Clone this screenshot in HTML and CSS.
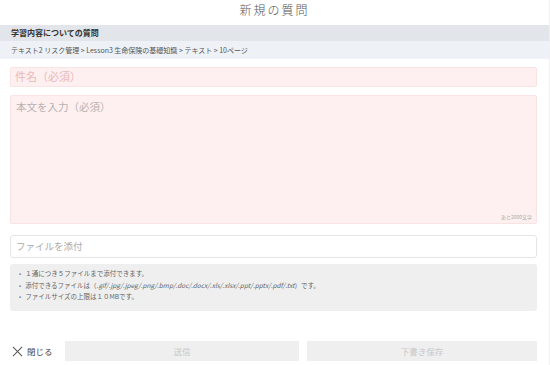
FILE: index.html
```html
<!DOCTYPE html>
<html lang="ja">
<head>
<meta charset="utf-8">
<link rel="stylesheet" href="styles.css">
</head>
<body>
<div class="page">
  <h1 class="title">新規の質問</h1>
  <div class="section-head">学習内容についての質問</div>
  <div class="crumbs">テキスト2 リスク管理 &gt; Lesson3 生命保険の基礎知識 &gt; テキスト &gt; 10ページ</div>
  <div class="form">
    <div class="field subject">件名（必須）</div>
    <div class="field body-field">
      <span class="ph">本文を入力（必須）</span>
      <span class="counter">あと2000文字</span>
    </div>
    <div class="field file">ファイルを添付</div>
    <ul class="info">
      <li>１通につき５ファイルまで添付できます。</li>
      <li>添付できるファイルは（<i>.gif/.jpg/.jpeg/.png/.bmp/.doc/.docx/.xls/.xlsx/.ppt/.pptx/.pdf/.txt</i>）です。</li>
      <li>ファイルサイズの上限は１０MBです。</li>
    </ul>
    <div class="footer">
      <div class="close">
        <svg class="x" viewBox="0 0 12 12" width="11" height="11"><path d="M1 1L11 11M11 1L1 11" stroke="#555" stroke-width="1.1" fill="none"/></svg>
        <span>閉じる</span>
      </div>
      <div class="btn send">送信</div>
      <div class="btn draft">下書き保存</div>
    </div>
  </div>
</div>
</body>
</html>
```
FILE: styles.css
```css
* { box-sizing: border-box; }
html, body { margin: 0; padding: 0; background: #fff; }
body {
  font-family: "Noto Sans CJK JP", "Noto Sans", sans-serif;
  color: #444;
  width: 550px;
  height: 365px;
  overflow: hidden;
}
.page { width: 550px; border-right: 1px solid #f0f0f0; height: 365px; }
.title {
  margin: 0;
  height: 25px;
  line-height: 20px;
  text-align: center;
  font-size: 12px;
  font-weight: 300;
  letter-spacing: 2px;
  color: #555;
}
.section-head {
  height: 16px;
  line-height: 16px;
  background: #e2e6ea;
  padding-left: 11px;
  font-size: 8px;
  font-weight: 700;
  color: #333;
}
.crumbs {
  height: 18px;
  line-height: 18px;
  background: #eef1f5;
  padding-left: 11px;
  font-size: 7px;
  color: #555;
}
.form { padding: 0 12px 0 10px; }
.field {
  border-radius: 2px;
  font-size: 11px;
}
.subject {
  margin-top: 8px;
  height: 20px;
  background: #fef0f0;
  border: 1px solid #fae3e3;
  color: #e9b8b8;
  line-height: 17px;
  padding-left: 4px;
}
.body-field {
  margin-top: 8px;
  height: 129px;
  background: #fef0f0;
  border: 1px solid #fae3e3;
  position: relative;
  padding: 2px 5px;
}
.body-field .ph { color: #b8b2b2; font-size: 10.5px; }
.counter {
  position: absolute;
  right: 4px;
  bottom: 3px;
  font-size: 5px;
  color: #aaa;
}
.file {
  margin-top: 11px;
  height: 23px;
  border: 1px solid #e6e6e6;
  border-radius: 3px;
  line-height: 20px;
  padding-left: 5px;
  font-size: 9.5px;
  color: #aaa;
}
.info {
  margin: 6px 0 0;
  height: 47px;
  background: #efefef;
  border-radius: 3px;
  list-style: none;
  padding: 4px 0 0 9px;
  font-size: 6.5px;
  color: #666;
}
.info li { height: 11.5px; line-height: 11.5px; }
.info li::before { content: "•"; margin-right: 4px; color: #888; }
.footer {
  margin-top: 30px;
  display: flex;
  align-items: center;
  height: 20px;
}
.close {
  width: 55px;
  display: flex;
  align-items: center;
  gap: 4px;
  padding-left: 2px;
  font-size: 8.5px;
  color: #444;
}
.btn {
  height: 20px;
  line-height: 20px;
  background: #efefef;
  text-align: center;
  font-size: 8.5px;
  color: #c8c8c8;
}
.send { width: 234px; margin-right: 8px; }
.draft { flex: 1; }
```
